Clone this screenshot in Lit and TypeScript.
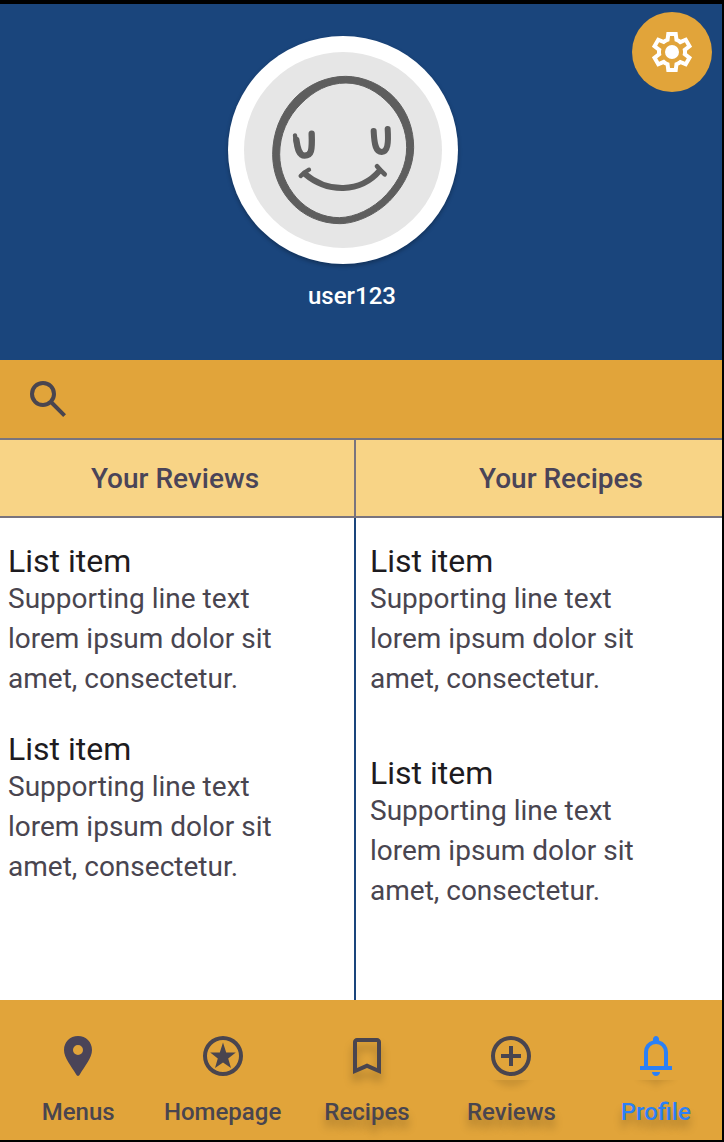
import { LitElement, html, css, svg, nothing } from "lit";
import { customElement, property, state } from "lit/decorators.js";
import { classMap } from "lit/directives/class-map.js";

interface Entry {
  title: string;
  text: string;
}

interface NavItem {
  id: string;
  label: string;
  shadow: "none" | "full" | "below";
}

const BODY = "Supporting line text lorem ipsum dolor sit amet, consectetur.";

const REVIEWS: Entry[] = [
  { title: "List item", text: BODY },
  { title: "List item", text: BODY },
];

const RECIPES: Entry[] = [
  { title: "List item", text: BODY },
  { title: "List item", text: BODY },
];

const NAV: NavItem[] = [
  { id: "menus", label: "Menus", shadow: "none" },
  { id: "homepage", label: "Homepage", shadow: "none" },
  { id: "recipes", label: "Recipes", shadow: "full" },
  { id: "reviews", label: "Reviews", shadow: "below" },
  { id: "profile", label: "Profile", shadow: "below" },
];

const GLYPHS: Record<string, ReturnType<typeof svg>> = {
  menus: svg`<path fill-rule="evenodd" d="M12 2C8 2 5 5 5 9C5 13.2 8.6 16.8 11.1 21.3Q11.4 22 12 22Q12.6 22 12.9 21.3C15.4 16.8 19 13.2 19 9C19 5 16 2 12 2ZM12 6.5A2.5 2.5 0 1 1 12 11.5A2.5 2.5 0 1 1 12 6.5Z"/>`,
  homepage: svg`<path fill-rule="evenodd" d="M12 2A10 10 0 1 0 12 22A10 10 0 1 0 12 2ZM12 4A8 8 0 1 1 12 20A8 8 0 1 1 12 4Z"/><path d="M12 5.2L13.6 10.3H18.4L14.6 13.3L16 18L12 15.2L8 18L9.4 13.3L5.6 10.3H10.4Z"/>`,
  recipes: svg`<path d="M5 21V5q0-.825.588-1.413T7 3h10q.825 0 1.413.588T19 5v16l-7-3-7 3Zm2-3.05l5-2.15 5 2.15V5H7v12.95Z"/>`,
  reviews: svg`<path fill-rule="evenodd" d="M12 2A10 10 0 1 0 12 22A10 10 0 1 0 12 2ZM12 4A8 8 0 1 1 12 20A8 8 0 1 1 12 4Z"/><path d="M11 7h2v4h4v2h-4v4h-2v-4H7v-2h4Z"/>`,
  profile: svg`<path d="M4 19v-2h2v-7q0-2.075 1.25-3.688T10.5 4.2v-.7q0-.625.438-1.062T12 2q.625 0 1.063.438T13.5 3.5v.7q2 .5 3.25 2.113T18 10v7h2v2H4Zm8 3q-.825 0-1.413-.588T10 20h4q0 .825-.588 1.413T12 22Zm-4-5h8v-7q0-1.65-1.175-2.825T12 6q-1.65 0-2.825 1.175T8 10v7Z"/>`,
};

@customElement("profile-avatar")
class ProfileAvatar extends LitElement {
  static styles = css`
    :host {
      display: block;
      width: 230px;
      height: 228px;
      border-radius: 50%;
      box-shadow: 0 2px 4px rgba(0, 0, 0, 0.3);
    }
    .face {
      display: block;
      width: 100%;
      height: 100%;
    }
  `;

  render() {
    return html`
      <svg class="face" viewBox="24 33 690 684" role="img" aria-label="Avatar">
        <ellipse cx="369" cy="375" rx="345" ry="342" fill="#fff" />
        <ellipse cx="369" cy="375" rx="297" ry="294" fill="#e6e6e6" />
        <path
          fill="#5e5e5e"
          stroke="#5e5e5e"
          stroke-width="3"
          fill-rule="evenodd"
          d="M377 154C430 154 488 179 527 222C564 263 581 315 581 368C580 424 556 476 516 520C477 564 411 596 359 596C304 596 247 573 208 526C174 485 158 438 158 388C158 325 181 265 225 219C266 177 322 154 377 154ZM378 174C324 174 281 198 243 236C203 276 179 328 179 388C179 439 199 483 230 519C264 557 311 578 358 578C405 577 459 552 499 509C537 468 560 421 560 367C560 318 541 273 510 239C474 199 427 174 378 174Z"
        />
        <g fill="none" stroke="#5e5e5e" stroke-linecap="round" stroke-linejoin="round">
          <path stroke-width="13" d="M225 331C227 352 230 366 235 376" />
          <path stroke-width="19" d="M229 345C233 374 238 392 254 392C274 392 277 378 275 326" />
          <path stroke-width="18" d="M461 318C463 362 468 381 485 381C503 380 506 356 503 312" />
          <path stroke-width="18" d="M254 446C322 504 421 505 479 437" />
          <path stroke-width="13" d="M242 453Q252 442 267 434" />
          <path stroke-width="14" d="M471 424Q482 437 494 448" />
        </g>
      </svg>
    `;
  }
}

@customElement("entry-list")
class EntryList extends LitElement {
  @property({ attribute: false }) entries: Entry[] = [];
  @property({ type: Boolean, reflect: true }) relaxed = false;

  static styles = css`
    :host {
      display: block;
      padding: 25px 48px 24px 8px;
    }
    :host([relaxed]) {
      padding-left: 14px;
    }
    .list {
      display: flex;
      flex-direction: column;
      gap: 32px;
      margin: 0;
      padding: 0;
      list-style: none;
    }
    :host([relaxed]) .list {
      gap: 56px;
    }
    .title {
      margin: 0;
      font-size: 32px;
      line-height: 36px;
      font-weight: 400;
      color: #1d1b20;
    }
    .text {
      margin: 0;
      font-size: 28px;
      line-height: 40px;
      color: #49454f;
    }
  `;

  render() {
    return html`
      <ul class="list">
        ${this.entries.map(
          (e) => html`
            <li>
              <h3 class="title">${e.title}</h3>
              <p class="text">${e.text}</p>
            </li>
          `
        )}
      </ul>
    `;
  }
}

@customElement("bottom-nav")
class BottomNav extends LitElement {
  @state() private active = "profile";

  static styles = css`
    :host {
      display: block;
      overflow: hidden;
      background: #e1a43a;
    }
    .items {
      display: grid;
      grid-template-columns: repeat(5, 1fr);
      margin: 0 -6px 0 6px;
      padding: 24px 0 12px;
      list-style: none;
    }
    .link {
      display: flex;
      flex-direction: column;
      align-items: center;
      gap: 8px;
      color: #49454f;
      font-size: 24px;
      line-height: 32px;
      font-weight: 500;
      text-decoration: none;
    }
    .active {
      color: #2b80f6;
    }
    .menus .icon {
      color: #4a4458;
    }
    .icon {
      width: 48px;
      height: 48px;
      margin: 8px 0;
      overflow: visible;
      fill: currentColor;
    }
    .shaded .label {
      text-shadow: 0 8px 8px rgba(0, 0, 0, 0.25);
    }
    .recipes .icon {
      filter: drop-shadow(0 8px 4px rgba(0, 0, 0, 0.25));
    }
  `;

  private icon(item: NavItem) {
    const glyph = GLYPHS[item.id];
    return html`
      <svg class="icon" viewBox="0 0 24 24" aria-hidden="true">
        ${item.shadow === "below"
          ? svg`
              <defs>
                <clipPath id="below"><rect x="-6" y="24" width="36" height="10"/></clipPath>
                <filter id="soft" x="-50%" y="-50%" width="200%" height="200%"><feGaussianBlur stdDeviation="2"/></filter>
              </defs>
              <g clip-path="url(#below)"><g fill="#000" opacity="0.25" transform="translate(0 4)" filter="url(#soft)">${glyph}</g></g>`
          : nothing}
        ${glyph}
      </svg>
    `;
  }

  render() {
    return html`
      <nav aria-label="Main">
        <ul class="items">
          ${NAV.map(
            (item) => html`
              <li>
                <a
                  href="#${item.id}"
                  class=${classMap({
                    link: true,
                    [item.id]: true,
                    shaded: item.shadow !== "none",
                    active: item.id === this.active,
                  })}
                  aria-current=${item.id === this.active ? "page" : nothing}
                  @click=${() => (this.active = item.id)}
                >
                  ${this.icon(item)}
                  <span class="label">${item.label}</span>
                </a>
              </li>
            `
          )}
        </ul>
      </nav>
    `;
  }
}

@customElement("app-root")
class AppRoot extends LitElement {
  static styles = css`
    :host {
      display: flex;
      flex-direction: column;
      box-sizing: border-box;
      min-height: 100vh;
      border: solid #000;
      border-width: 4px 2px 2px 0;
      background: #fff;
      font-family: Roboto, "Liberation Sans", sans-serif;
    }
    .header {
      position: relative;
      display: flex;
      flex-direction: column;
      align-items: center;
      gap: 16px;
      padding: 32px 36px 48px 0;
      background: #1a457c;
    }
    .name {
      margin: 0;
      padding-left: 18px;
      font-size: 24px;
      line-height: 32px;
      font-weight: 500;
      color: #fff;
    }
    .settings {
      position: absolute;
      top: 8px;
      right: 10px;
      display: grid;
      place-items: center;
      width: 80px;
      height: 80px;
      padding: 0;
      border: 0;
      border-radius: 50%;
      background: #e1a43a;
      color: #fff;
      cursor: pointer;
    }
    .icon {
      display: block;
      flex: none;
      width: 48px;
      height: 48px;
      fill: currentColor;
    }
    .search {
      display: flex;
      align-items: center;
      gap: 16px;
      height: 78px;
      padding: 0 24px;
      background: #e1a43a;
      color: #49454f;
    }
    .field {
      flex: 1;
      min-width: 0;
      height: 48px;
      padding: 0;
      border: 0;
      outline: 0;
      background: transparent;
      color: inherit;
      font: 400 28px/40px Roboto, sans-serif;
    }
    .tabs,
    .columns {
      display: grid;
      grid-template-columns: 178fr 183fr;
    }
    .tabs {
      border: solid #79747e;
      border-width: 2px 0;
      background: #f8d486;
    }
    .tab {
      height: 76px;
      padding: 2px 4px 0 0;
      border: 0;
      background: none;
      color: #4a4458;
      font: 500 28px/40px Roboto, sans-serif;
      cursor: pointer;
    }
    .tab:first-child {
      border-right: 2px solid #79747e;
    }
    .tab:last-child {
      padding: 2px 0 0 44px;
    }
    .columns {
      flex: 1;
    }
    .reviews {
      border-right: 2px solid #1a457c;
    }
  `;

  render() {
    return html`
      <header class="header">
        <profile-avatar></profile-avatar>
        <h1 class="name">user123</h1>
        <button class="settings" type="button" aria-label="Settings">
          <svg class="icon" viewBox="0 0 24 24" aria-hidden="true">
            <path
              fill-rule="evenodd"
              d="M9.25 22L8.85 18.8C8.63 18.72 8.43 18.62 8.24 18.5C8.05 18.38 7.86 18.26 7.68 18.13L4.7 19.38L1.95 14.63L4.53 12.68C4.51 12.56 4.5 12.45 4.5 12.34V11.66C4.5 11.55 4.51 11.44 4.53 11.33L1.95 9.38L4.7 4.63L7.68 5.88C7.86 5.74 8.05 5.62 8.25 5.5C8.45 5.38 8.65 5.28 8.85 5.2L9.25 2H14.75L15.15 5.2C15.37 5.28 15.57 5.38 15.76 5.5C15.95 5.62 16.14 5.74 16.33 5.88L19.3 4.63L22.05 9.38L19.48 11.33C19.49 11.44 19.5 11.55 19.5 11.66V12.34C19.5 12.45 19.48 12.56 19.45 12.68L22.03 14.63L19.28 19.38L16.33 18.13C16.14 18.26 15.95 18.38 15.75 18.5C15.55 18.62 15.35 18.72 15.15 18.8L14.75 22H9.25ZM11 20H12.98L13.33 17.35C13.84 17.22 14.32 17.02 14.76 16.76C15.2 16.5 15.6 16.19 15.98 15.83L18.45 16.85L19.43 15.15L17.28 13.53C17.36 13.29 17.42 13.05 17.45 12.79C17.48 12.53 17.5 12.27 17.5 12C17.5 11.73 17.48 11.47 17.45 11.21C17.42 10.95 17.36 10.71 17.28 10.48L19.43 8.85L18.45 7.15L15.98 8.2C15.6 7.8 15.2 7.47 14.76 7.21C14.32 6.95 13.84 6.76 13.33 6.63L13 4H11.03L10.68 6.63C10.16 6.76 9.68 6.95 9.24 7.21C8.8 7.47 8.4 7.79 8.03 8.18L5.55 7.15L4.58 8.85L6.73 10.45C6.64 10.7 6.58 10.95 6.55 11.2C6.52 11.45 6.5 11.72 6.5 12C6.5 12.27 6.52 12.53 6.55 12.78C6.58 13.03 6.64 13.28 6.73 13.53L4.58 15.15L5.55 16.85L8.03 15.8C8.4 16.18 8.8 16.5 9.24 16.76C9.68 17.02 10.16 17.22 10.68 17.35L11 20Z"
            />
            <circle cx="12" cy="12" r="3.5" />
          </svg>
        </button>
      </header>

      <label class="search">
        <svg class="icon" viewBox="0 0 24 24" role="img" aria-label="Search">
          <path
            d="M19.6 21l-6.3-6.3q-.75.6-1.725.95T9.5 16q-2.725 0-4.613-1.888T3 9.5q0-2.725 1.888-4.613T9.5 3q2.725 0 4.613 1.888T16 9.5q0 1.1-.35 2.075T14.7 13.3l6.3 6.3-1.4 1.4ZM9.5 14q1.875 0 3.188-1.313T14 9.5q0-1.875-1.313-3.188T9.5 5Q7.625 5 6.312 6.312T5 9.5q0 1.875 1.313 3.188T9.5 14Z"
          />
        </svg>
        <input class="field" type="search" aria-label="Search" />
      </label>

      <div class="tabs">
        <button class="tab" type="button">Your Reviews</button>
        <button class="tab" type="button">Your Recipes</button>
      </div>

      <main class="columns">
        <entry-list class="reviews" .entries=${REVIEWS}></entry-list>
        <entry-list relaxed .entries=${RECIPES}></entry-list>
      </main>

      <bottom-nav></bottom-nav>
    `;
  }
}
